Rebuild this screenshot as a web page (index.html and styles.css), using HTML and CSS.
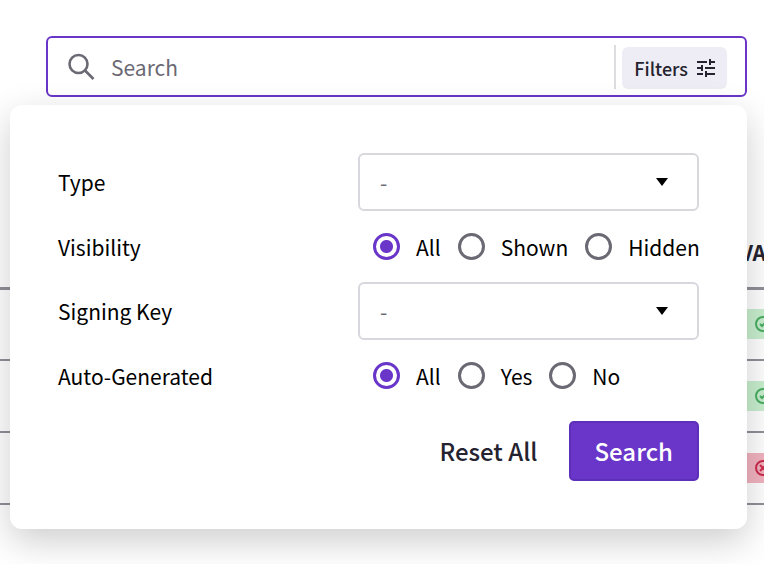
FILE: index.html
```html
<!DOCTYPE html>
<html lang="en">

<head>
  <meta charset="UTF-8">
  <meta name="viewport" content="width=device-width, initial-scale=1.0">
  <title>Search</title>
  <link rel="stylesheet" href="styles.css">
</head>

<body>
  <form class="search">
    <div class="search-bar">
      <svg class="search-icon" viewBox="0 0 28 28" aria-hidden="true">
        <circle cx="10.5" cy="11" r="9" />
        <path d="M17 17.5L25.5 26" />
      </svg>
      <input class="search-input" type="text" placeholder="Search" aria-label="Search">
      <div class="search-actions">
        <button class="filters-button" type="button">
          Filters
          <svg class="tune-icon" viewBox="0 0 18 18" aria-hidden="true">
            <path d="M0 3h10M12 3h6M13 0v6M0 9h6M8 9h10M5 6v6M0 15h6M8 15h10M9 12v6" />
          </svg>
        </button>
      </div>
    </div>

    <div class="filters">
      <div class="fields">
        <label class="field-label" for="type">Type</label>
        <div class="select">
          <select id="type">
            <option>-</option>
          </select>
          <svg class="caret" viewBox="0 0 12 8" aria-hidden="true"><path d="M0 0h12L6 8z" /></svg>
        </div>

        <span class="field-label" id="visibility">Visibility</span>
        <div class="radios" role="radiogroup" aria-labelledby="visibility">
          <label><input type="radio" name="visibility" checked>All</label>
          <label><input type="radio" name="visibility">Shown</label>
          <label><input type="radio" name="visibility">Hidden</label>
        </div>

        <label class="field-label" for="signing-key">Signing Key</label>
        <div class="select">
          <select id="signing-key">
            <option>-</option>
          </select>
          <svg class="caret" viewBox="0 0 12 8" aria-hidden="true"><path d="M0 0h12L6 8z" /></svg>
        </div>

        <span class="field-label" id="auto-generated">Auto-Generated</span>
        <div class="radios" role="radiogroup" aria-labelledby="auto-generated">
          <label><input type="radio" name="auto-generated" checked>All</label>
          <label><input type="radio" name="auto-generated">Yes</label>
          <label><input type="radio" name="auto-generated">No</label>
        </div>
      </div>

      <div class="buttons">
        <button class="reset" type="reset">Reset All</button>
        <button class="submit" type="submit">Search</button>
      </div>
    </div>
  </form>

  <table class="results">
    <thead>
      <tr>
        <th></th>
        <th class="status">VA</th>
      </tr>
    </thead>
    <tbody>
      <tr>
        <td></td>
        <td class="status">
          <div class="badge valid">
            <svg viewBox="0 0 16 16" aria-hidden="true"><circle cx="8" cy="8" r="7" /><path d="M5 8l2 2 4-4" /></svg>
          </div>
        </td>
      </tr>
      <tr>
        <td></td>
        <td class="status">
          <div class="badge valid">
            <svg viewBox="0 0 16 16" aria-hidden="true"><circle cx="8" cy="8" r="7" /><path d="M5 8l2 2 4-4" /></svg>
          </div>
        </td>
      </tr>
      <tr>
        <td></td>
        <td class="status">
          <div class="badge invalid">
            <svg viewBox="0 0 16 16" aria-hidden="true"><circle cx="8" cy="8" r="7" /><path d="M5 5l6 6M11 5l-6 6" /></svg>
          </div>
        </td>
      </tr>
    </tbody>
  </table>
</body>

</html>
```

FILE: styles.css
```css
* {
  box-sizing: border-box;
}

body {
  display: flow-root;
  min-height: 100vh;
  margin: 0;
  overflow-x: hidden;
  color: #000;
  background-color: #fff;
}

body,
button,
input,
select {
  font-family: "Noto Sans CJK SC", "Noto Sans", sans-serif;
  font-size: 21px;
  line-height: 30px;
}

button {
  cursor: pointer;
}

svg {
  display: block;
  flex: none;
  fill: none;
  stroke: currentColor;
}

/* search bar */
.search {
  position: relative;
  margin: 36px 17px 0 46px;
}

.search-bar {
  display: flex;
  align-items: center;
  padding: 7px 18px 6px 20px;
  border: 2px solid #6936c9;
  border-radius: 6px;
}

.search-icon {
  width: 28px;
  height: 28px;
  color: #6b6974;
  stroke-width: 2.6;
}

.search-input {
  flex: 1;
  min-width: 0;
  padding: 0 15px;
  border: none;
  outline: none;
  background: none;
}

.search-input::placeholder {
  color: #6b6974;
  opacity: 1;
}

.search-actions {
  padding: 2px 0 0 6px;
  border-left: 2px solid #dddde0;
}

.filters-button {
  display: flex;
  align-items: center;
  gap: 9px;
  padding: 6px 12px;
  border: none;
  border-radius: 6px;
  color: #25232f;
  background-color: #eeecf4;
  font-size: 18px;
  font-weight: 500;
}

.tune-icon {
  width: 18px;
  height: 18px;
  stroke-width: 2;
}

/* filters dropdown */
.filters {
  position: absolute;
  z-index: 1;
  top: 69px;
  left: -36px;
  right: 0;
  padding: 48px;
  border-radius: 12px;
  background-color: #fff;
  box-shadow: 0 12px 36px rgba(0, 0, 0, 0.2);
}

.fields {
  display: grid;
  grid-template-columns: 1fr 341px;
  align-items: center;
  row-gap: 16px;
}

.select {
  display: grid;
  align-items: center;
}

.select select,
.select .caret {
  grid-area: 1 / 1;
}

.select select {
  width: 100%;
  height: 58px;
  padding: 0 20px;
  border: 2px solid #d8d7de;
  border-radius: 6px;
  color: #6b6974;
  background-color: #fff;
  appearance: none;
}

.caret {
  justify-self: end;
  width: 12px;
  height: 8px;
  margin-right: 31px;
  fill: #000;
  stroke: none;
  pointer-events: none;
}

.radios {
  display: flex;
  gap: 17px;
  height: 39px;
  padding-left: 15px;
}

.radios label {
  display: flex;
  align-items: center;
  gap: 16px;
}

.radios input {
  width: 27px;
  height: 27px;
  margin: 0;
  border: 3px solid #6b6974;
  border-radius: 50%;
  appearance: none;
}

.radios input:checked {
  border-color: #6936c9;
  background: radial-gradient(circle, #6936c9 6px, #fff 7px);
}

.buttons {
  display: flex;
  justify-content: flex-end;
  margin-top: 26px;
}

.buttons button {
  height: 60px;
  border-radius: 5px;
  font-size: 24px;
  font-weight: 500;
}

.reset {
  padding: 0 31px;
  border: none;
  color: #25232f;
  background: none;
}

.submit {
  padding: 0 24px;
  border: 2px solid #5e2fb8;
  color: #fff;
  background-color: #6936c9;
}

/* results table */
.results {
  width: 100%;
  margin-top: 121px;
  border-collapse: collapse;
  table-layout: fixed;
}

.results th,
.results td {
  height: 72px;
  padding: 0;
  border-bottom: 2px solid #918f98;
}

.results th {
  height: 70px;
  border-bottom-width: 3px;
  color: #25232f;
  font-weight: 700;
  text-align: left;
}

.results .status {
  width: 24px;
}

.badge {
  display: flex;
  align-items: center;
  height: 30px;
  padding-left: 15px;
}

.badge svg {
  width: 16px;
  height: 16px;
  stroke-width: 2;
}

.valid {
  color: #4aae62;
  background-color: #c8efce;
}

.invalid {
  color: #cc2b4d;
  background-color: #f2b3bf;
}
```
